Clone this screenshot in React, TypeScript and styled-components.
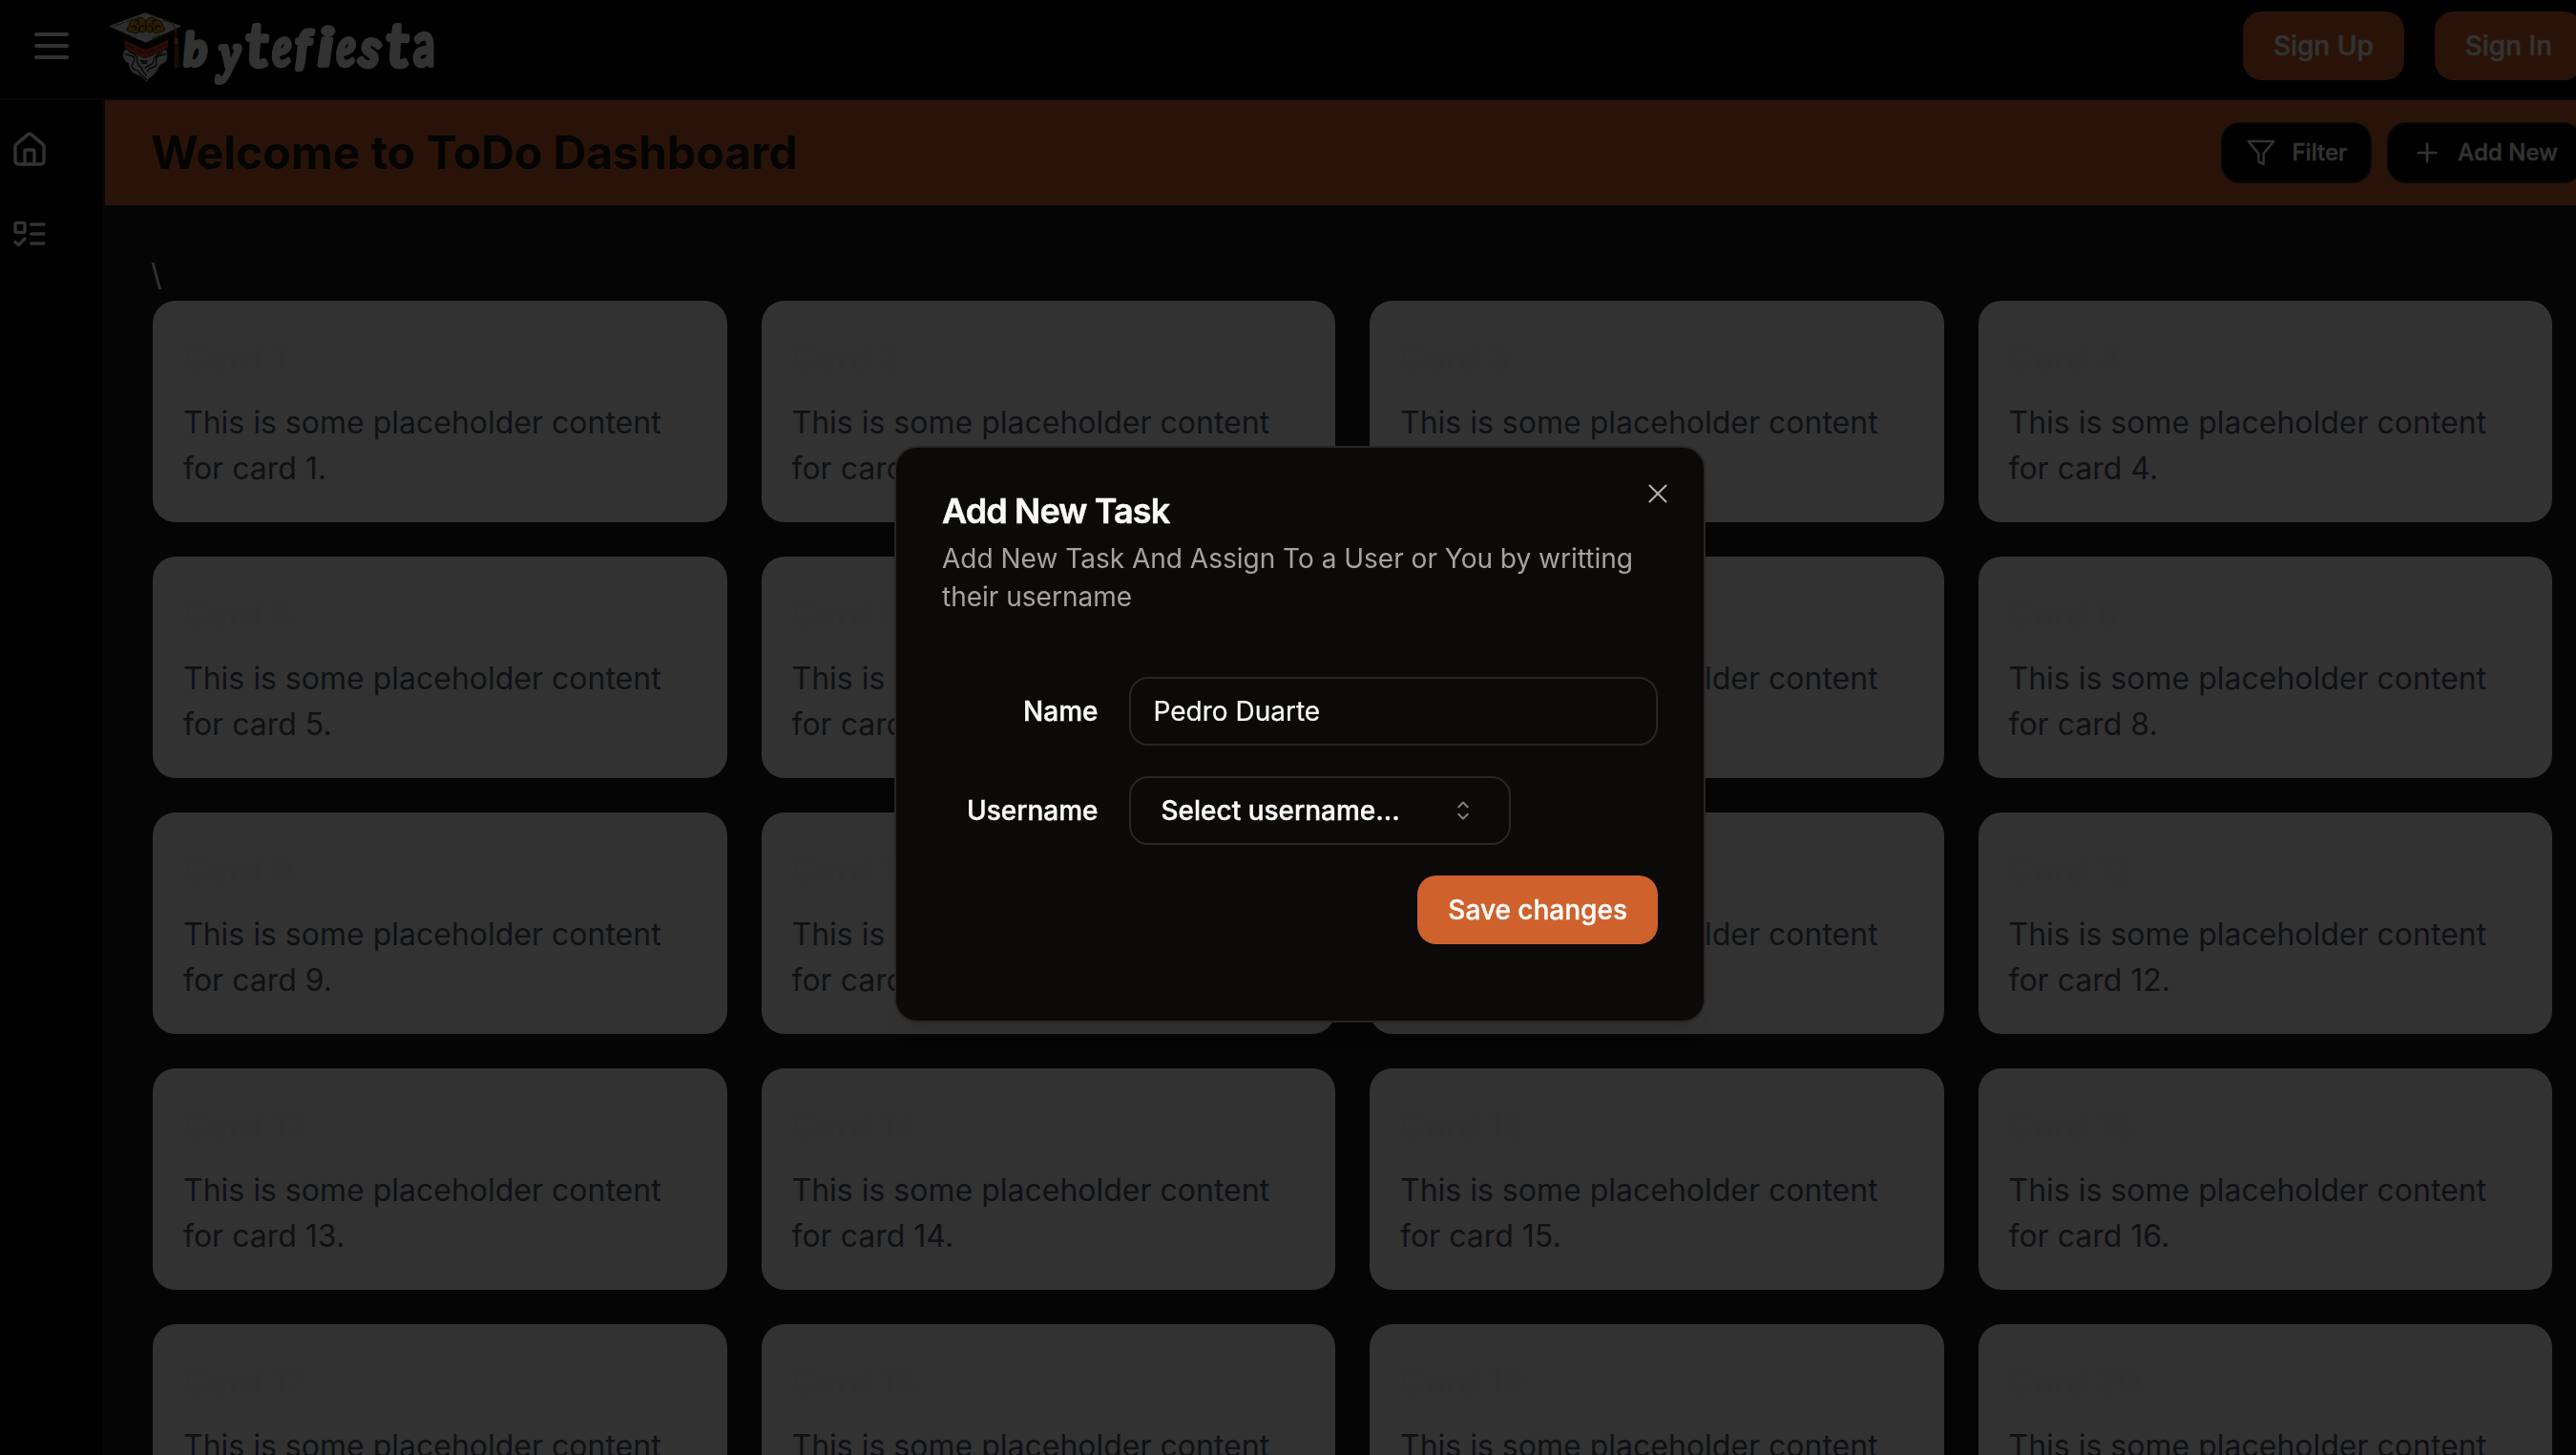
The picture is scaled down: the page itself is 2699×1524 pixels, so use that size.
import React from "react";
import styled, { createGlobalStyle } from "styled-components";

const GlobalStyle = createGlobalStyle`
  *, *::before, *::after { box-sizing: border-box; }
  html, body { margin: 0; padding: 0; height: 100%; background: #000; overflow: hidden; }
  body { font-family: Inter, "Liberation Sans", sans-serif; }
  h1, h2, h3, p { margin: 0; }
  button, input { font-family: inherit; margin: 0; }
`;

const Page = styled.div`
  width: 2724px;
  height: 1524px;
  display: flex;
  flex-direction: column;
  overflow: hidden;
  background: #191919;
  color: #fafaf9;
`;

const Navbar = styled.header`
  flex: none;
  height: 105px;
  padding: 12px 18px 0 30px;
  display: flex;
  align-items: flex-start;
  background: #000;
  border-bottom: 2px solid #292524;
`;

const MenuButton = styled.button`
  display: flex;
  padding: 12px 0;
  border: 0;
  background: none;
  color: #fafaf9;
`;

const Logo = styled.svg`
  display: block;
  width: 355px;
  height: 87px;
  margin: -4px auto 0 32px;
`;

const Button = styled.button`
  height: 72px;
  padding: 0 32px;
  border: 0;
  border-radius: 20px;
  background: #ce612c;
  color: #fafaf9;
  font-size: 28px;
  font-weight: 500;
  line-height: 40px;
  white-space: nowrap;
  -webkit-text-stroke: 0.4px currentColor;
`;

const NavActions = styled.div`
  display: flex;
  gap: 32px;
`;

const Body = styled.div`
  flex: 1;
  min-height: 0;
  display: flex;
`;

const Sidebar = styled.nav`
  flex: none;
  width: 110px;
  padding: 32px 0 0 11px;
  display: flex;
  flex-direction: column;
  gap: 48px;
  background: #000;
  border-right: 2px solid #292524;
`;

const Main = styled.main`
  flex: 1;
  min-width: 0;
  display: flex;
  flex-direction: column;
`;

const Banner = styled.section`
  flex: none;
  height: 110px;
  padding: 0 18px 0 48px;
  display: flex;
  align-items: center;
  justify-content: space-between;
  background: #ce612c;
`;

const BannerTitle = styled.h1`
  font-size: 48px;
  font-weight: 700;
  line-height: 64px;
  color: #171412;
`;

const BannerActions = styled.div`
  display: flex;
  gap: 16px;
`;

const ToolButton = styled.button`
  height: 64px;
  padding: 0 24px;
  display: flex;
  align-items: center;
  gap: 16px;
  border: 2px solid #292524;
  border-radius: 20px;
  background: #000;
  color: #fafaf9;
  font-size: 24px;
  font-weight: 500;
  line-height: 32px;
  white-space: nowrap;
  -webkit-text-stroke: 0.4px currentColor;
`;

const Content = styled.div`
  padding: 48px;
  font-size: 32px;
  line-height: 50px;
`;

const CardGrid = styled.div`
  display: grid;
  grid-template-columns: repeat(4, 1fr);
  gap: 36px;
  padding: 2px;
`;

const Card = styled.article`
  height: 232px;
  padding: 32px;
  border-radius: 24px;
  background: #fafaf9;
`;

const CardTitle = styled.h3`
  margin-bottom: 16px;
  font-size: 36px;
  font-weight: 600;
  line-height: 56px;
  color: #f5f5f4;
`;

const CardText = styled.p`
  font-size: 32px;
  line-height: 48px;
  color: #4b5563;
`;

const Overlay = styled.div`
  position: fixed;
  top: 0;
  left: 0;
  width: 2724px;
  height: 1538px;
  display: flex;
  align-items: center;
  justify-content: center;
  background: rgba(0, 0, 0, 0.8);
`;

const Dialog = styled.section`
  position: relative;
  width: 850px;
  padding: 48px;
  display: flex;
  flex-direction: column;
  gap: 32px;
  border: 2px solid #292524;
  border-radius: 24px;
  background: #0c0a09;
  color: #fafaf9;
  box-shadow: 0 20px 30px -6px rgba(0, 0, 0, 0.1), 0 8px 12px -8px rgba(0, 0, 0, 0.1);
`;

const DialogHeader = styled.header`
  display: flex;
  flex-direction: column;
  gap: 12px;
`;

const DialogTitle = styled.h2`
  font-size: 36px;
  font-weight: 600;
  line-height: 36px;
  letter-spacing: -0.025em;
  -webkit-text-stroke: 0.5px currentColor;
`;

const DialogText = styled.p`
  font-size: 28px;
  line-height: 40px;
  color: #a8a29e;
`;

const CloseButton = styled.button`
  position: absolute;
  top: 32px;
  right: 32px;
  display: flex;
  padding: 0;
  border: 0;
  background: none;
  color: #fafaf9;
  opacity: 0.7;
`;

const Form = styled.form`
  display: flex;
  flex-direction: column;
  gap: 32px;
  padding: 32px 0;
`;

const Field = styled.div`
  display: grid;
  grid-template-columns: repeat(4, 1fr);
  align-items: center;
  column-gap: 32px;
`;

const Label = styled.label`
  font-size: 28px;
  font-weight: 500;
  line-height: 28px;
  text-align: right;
  -webkit-text-stroke: 0.4px currentColor;
`;

const TextInput = styled.input`
  grid-column: span 3;
  width: 100%;
  height: 72px;
  padding: 8px 24px;
  border: 2px solid #292524;
  border-radius: 20px;
  outline: 0;
  background: transparent;
  color: #fafaf9;
  font-size: 28px;
  -webkit-text-stroke: 0.2px currentColor;
`;

const Combobox = styled.button`
  grid-column: span 3;
  width: 400px;
  height: 72px;
  padding: 0 32px;
  display: flex;
  align-items: center;
  justify-content: space-between;
  border: 2px solid #292524;
  border-radius: 20px;
  background: #0c0a09;
  color: #fafaf9;
  font-size: 28px;
  font-weight: 500;
  -webkit-text-stroke: 0.4px currentColor;

  svg { opacity: 0.5; }
`;

const FormFooter = styled.footer`
  display: flex;
  justify-content: flex-end;
`;

type IconProps = { size: number; box?: number; stroke?: number; children: React.ReactNode };

const Icon = ({ size, box = 24, stroke = 2, children }: IconProps) => (
  <svg
    width={size}
    height={size}
    viewBox={`0 0 ${box} ${box}`}
    fill="none"
    stroke="currentColor"
    strokeWidth={stroke}
    strokeLinecap="round"
    strokeLinejoin="round"
  >
    {children}
  </svg>
);

type Letter = {
  ch: string;
  x: number;
  y: number;
  size: number;
  sx: number;
  rot: number;
  italic?: boolean;
  serif?: boolean;
};

const wordmark: Letter[] = [
  { ch: "b", x: 25, y: 160, size: 138, sx: 0.98, rot: -2, italic: true },
  { ch: "y", x: 137, y: 178, size: 164, sx: 0.88, rot: -2, italic: true, serif: true },
  { ch: "t", x: 216, y: 160, size: 188, sx: 0.98, rot: 3 },
  { ch: "e", x: 303, y: 160, size: 172, sx: 0.76, rot: -2, italic: true, serif: true },
  { ch: "f", x: 374, y: 157, size: 146, sx: 1.0, rot: 0, italic: true },
  { ch: "i", x: 446, y: 160, size: 156, sx: 1.25, rot: 0, italic: true },
  { ch: "e", x: 505, y: 160, size: 172, sx: 0.76, rot: -2, italic: true, serif: true },
  { ch: "s", x: 566, y: 153, size: 162, sx: 0.88, rot: 16 },
  { ch: "t", x: 658, y: 160, size: 188, sx: 0.98, rot: 3 },
  { ch: "a", x: 745, y: 160, size: 186, sx: 0.72, rot: 0 },
];

const BrandLogo = () => (
  <Logo viewBox="0 0 1065 261" aria-label="bytefiesta">
    <g strokeLinejoin="round" strokeLinecap="round">
      <path d="M66 130C50 142 56 168 74 174C76 192 84 206 100 210C112 214 124 222 131 234C134 222 148 218 156 208C166 196 166 188 176 178C196 174 202 150 190 132L128 154Z" fill="#dcdcdc" />
      <g fill="none" stroke="#111" strokeWidth="4">
        <path d="M64 146C76 152 88 148 92 158C96 170 80 176 86 188C92 200 104 192 108 204C112 214 122 212 130 226" />
        <path d="M76 140C92 144 104 154 102 166C98 180 112 182 116 192C118 202 126 204 130 214" />
        <path d="M192 146C180 150 168 148 162 158C156 168 168 174 158 184C148 190 138 188 132 200" />
        <path d="M180 142C166 144 152 156 152 170C150 182 138 178 126 190" />
        <path d="M112 166C118 170 126 168 132 168M116 174H130" />
      </g>
      <path d="M60 100L62 130Q98 146 124 158Q160 148 198 126L200 100L128 132Z" fill="#d23b30" stroke="#100" strokeWidth="2" />
      <path d="M70 118L90 128M102 134L118 142M136 142L154 134M166 128L188 116" stroke="#400e0a" strokeWidth="3" />
      <path d="M14 58L126 110L240 60L236 70L128 124L16 68Z" fill="#151515" />
      <path d="M12 58L126 16L240 58L128 110Z" fill="#dedede" />
      <path d="M28 58L60 47M68 44L88 37M150 96L172 86" stroke="#333" strokeWidth="2.5" />
      <path d="M128 44C122 26 100 28 96 38C82 38 74 48 76 58C62 66 72 80 84 76C94 84 106 80 108 74C120 82 128 76 128 68C132 78 140 80 150 74C156 82 170 82 174 76C186 80 194 66 182 58C182 46 172 38 160 38C154 26 134 28 128 44Z" fill="#c88a1e" stroke="#3a2400" strokeWidth="3" />
      <path d="M128 46V68M96 40C104 38 110 46 104 52M84 60C92 54 100 60 96 68M108 72C104 62 114 54 120 58M160 40C152 38 146 46 152 52M174 60C166 54 156 60 160 68M150 72C154 62 144 54 138 58" fill="none" stroke="#3a2400" strokeWidth="4" />
      <path d="M188 40C204 44 222 56 223 74V98" fill="none" stroke="#a8791a" strokeWidth="4" />
      <circle cx="188" cy="40" r="5" fill="#8a6214" />
      <rect x="218" y="96" width="12" height="22" rx="5" fill="#b98a20" />
      <path d="M219 120H231L233 188H218Z" fill="#6f5b12" />
      <path d="M223 124V186M228 124V186" stroke="#3a3008" strokeWidth="1.5" />
    </g>
    <g
      transform="translate(225 21)"
      fill="#fafaf9"
      stroke="#fafaf9"
      strokeWidth="17"
      strokeLinejoin="round"
    >
      {wordmark.map((l, i) => (
        <text
          key={i}
          fontSize={l.size}
          fontFamily={l.serif ? '"Liberation Serif", serif' : "Lato, sans-serif"}
          fontStyle={l.italic ? "italic" : "normal"}
          transform={`translate(${l.x} ${l.y}) rotate(${l.rot}) scale(${l.sx} 1)`}
        >
          {l.ch}
        </text>
      ))}
    </g>
  </Logo>
);

const cards = Array.from({ length: 20 }, (_, i) => i + 1);

export default function App() {
  return (
    <>
      <GlobalStyle />
      <Page>
        <Navbar>
          <MenuButton type="button" aria-label="Menu">
            <Icon size={48}>
              <path d="M4 6h16M4 12h16M4 18h16" />
            </Icon>
          </MenuButton>
          <BrandLogo />
          <NavActions>
            <Button>Sign Up</Button>
            <Button>Sign In</Button>
          </NavActions>
        </Navbar>
        <Body>
          <Sidebar>
            <Icon size={40}>
              <path d="M15 21v-8a1 1 0 0 0-1-1h-4a1 1 0 0 0-1 1v8" />
              <path d="M3 10a2 2 0 0 1 .709-1.528l7-5.999a2 2 0 0 1 2.582 0l7 5.999A2 2 0 0 1 21 10v9a2 2 0 0 1-2 2H5a2 2 0 0 1-2-2z" />
            </Icon>
            <Icon size={40}>
              <rect x="3" y="5" width="6" height="6" rx="1" />
              <path d="m3 17 2 2 4-4M13 6h8M13 12h8M13 18h8" />
            </Icon>
          </Sidebar>
          <Main>
            <Banner>
              <BannerTitle>Welcome to ToDo Dashboard</BannerTitle>
              <BannerActions>
                <ToolButton>
                  <Icon size={32} stroke={1.8}>
                    <path d="M22 3H2l8 9.46V19l4 2v-8.54z" />
                  </Icon>
                  Filter
                </ToolButton>
                <ToolButton>
                  <Icon size={32} stroke={2}>
                    <path d="M5 12h14M12 5v14" />
                  </Icon>
                  Add New
                </ToolButton>
              </BannerActions>
            </Banner>
            <Content>
              {"\\"}
              <CardGrid>
                {cards.map((n) => (
                  <Card key={n}>
                    <CardTitle>{`Card ${n}`}</CardTitle>
                    <CardText>{`This is some placeholder content for card ${n}.`}</CardText>
                  </Card>
                ))}
              </CardGrid>
            </Content>
          </Main>
        </Body>
      </Page>
      <Overlay>
        <Dialog role="dialog">
          <DialogHeader>
            <DialogTitle>Add New Task</DialogTitle>
            <DialogText>
              Add New Task And Assign To a User or You by writting their username
            </DialogText>
          </DialogHeader>
          <Form>
            <Field>
              <Label htmlFor="name">Name</Label>
              <TextInput id="name" defaultValue="Pedro Duarte" />
            </Field>
            <Field>
              <Label>Username</Label>
              <Combobox type="button">
                Select username...
                <Icon size={32} box={15} stroke={0.9}>
                  <path d="M5.25 5.75 7.5 3.5l2.25 2.25M5.25 9.25 7.5 11.5l2.25-2.25" />
                </Icon>
              </Combobox>
            </Field>
            <FormFooter>
              <Button type="button">Save changes</Button>
            </FormFooter>
          </Form>
          <CloseButton type="button" aria-label="Close">
            <Icon size={32} box={15} stroke={0.95}>
              <path d="m3.5 3.5 8 8M11.5 3.5l-8 8" />
            </Icon>
          </CloseButton>
        </Dialog>
      </Overlay>
    </>
  );
}
